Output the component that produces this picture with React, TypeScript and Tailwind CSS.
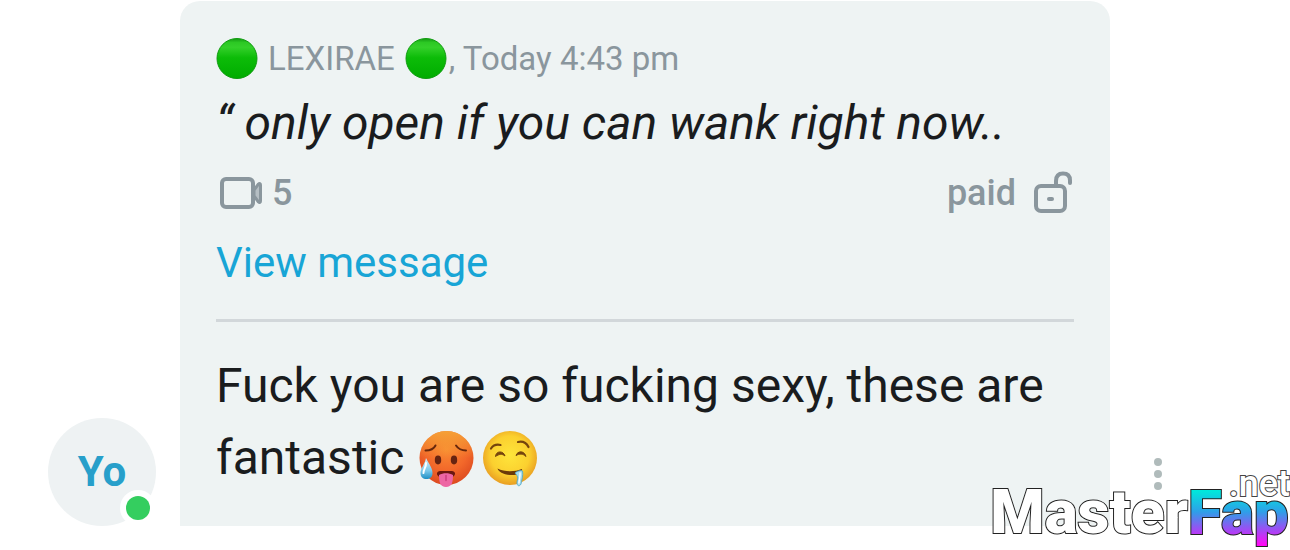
import React from 'react';

const GreenDot = () => (
  <svg viewBox="0 0 42 42" className="w-[42px] h-[42px] shrink-0" role="img" aria-label="green circle">
    <defs>
      <linearGradient id="dot" x1="0" y1="0" x2="0" y2="1">
        <stop offset="0" stopColor="#149a12" />
        <stop offset="0.1" stopColor="#2cc824" />
        <stop offset="0.22" stopColor="#34d02a" />
        <stop offset="0.48" stopColor="#0cbc08" />
        <stop offset="1" stopColor="#00ac00" />
      </linearGradient>
    </defs>
    <circle cx="21" cy="20.5" r="20" fill="url(#dot)" stroke="#109c10" strokeWidth="1" />
  </svg>
);

const VideoIcon = () => (
  <svg viewBox="0 0 48 34" className="w-12 h-[34px]" fill="none" stroke="#8a969d" strokeWidth="4" strokeLinejoin="round">
    <rect x="6" y="3" width="31" height="28" rx="4" />
    <path d="M38 14 L42.5 8 C43.5 7 44.5 7.5 44.5 9 V25 C44.5 26.5 43.5 27 42.5 26 L38 20 Z" fill="#b5bec3" strokeWidth="3" />
  </svg>
);

const UnlockIcon = () => (
  <svg viewBox="0 0 42 44" className="w-[42px] h-11" fill="none" stroke="#8a969d" strokeWidth="4" strokeLinecap="round">
    <rect x="4" y="15" width="29" height="25" rx="5" />
    <path d="M24 14 V10 C24 4.5 27 2.5 31 2.5 C35 2.5 38 4.5 38 9.5 V12" />
    <path d="M17 28 H20" />
  </svg>
);

const HotFace = () => (
  <svg viewBox="0 0 56 58" className="w-14 h-[58px]" role="img" aria-label="hot face">
    <defs>
      <radialGradient id="hot" cx="0.5" cy="0.35" r="0.65">
        <stop offset="0" stopColor="#f98a32" />
        <stop offset="0.6" stopColor="#f2672a" />
        <stop offset="1" stopColor="#dc4a20" />
      </radialGradient>
      <linearGradient id="hotTop" x1="0" y1="0" x2="0" y2="1">
        <stop offset="0" stopColor="#f6a737" stopOpacity="0.9" />
        <stop offset="0.5" stopColor="#f6a737" stopOpacity="0" />
      </linearGradient>
      <linearGradient id="sweat" x1="0" y1="0" x2="0" y2="1">
        <stop offset="0" stopColor="#d9f2fb" />
        <stop offset="0.6" stopColor="#7cc8ea" />
        <stop offset="1" stopColor="#1d8fc4" />
      </linearGradient>
    </defs>
    <circle cx="28.5" cy="28" r="27" fill="url(#hot)" />
    <circle cx="28.5" cy="28" r="27" fill="url(#hotTop)" />
    <path d="M7.5 20.5 C12 20.5 16 18.5 17.5 15.5 M38 15.5 C40 18.5 43.5 20.5 48 20.5" fill="none" stroke="#67280c" strokeWidth="2" strokeLinecap="round" />
    <ellipse cx="20" cy="30" rx="3.2" ry="4.4" fill="#662411" />
    <ellipse cx="36" cy="30" rx="3.2" ry="4.4" fill="#662411" />
    <path d="M19 43 C20 40.5 23 41 28 41 C33 41 36 40.5 37 43 C37.5 46 34 48 28 48 C22 48 18.5 46 19 43 Z" fill="#6b1710" />
    <path d="M21 45 C25 42.5 31 42.5 35 45 C35 52 34 57 28 57 C22 57 21 52 21 45 Z" fill="#ed66a4" />
    <path d="M28 45.5 V50.5" stroke="#c93b7b" strokeWidth="1.4" strokeLinecap="round" />
    <path d="M8 28 C11 34 14.5 38 14.5 43 C14.5 47 12 49 8.5 49 C5 49 2.5 47 2.5 43 C2.5 38 7 34 8 28 Z" fill="url(#sweat)" />
    <path d="M8 33 C8.5 37 5 40 5.5 43" fill="none" stroke="#ffffff" strokeWidth="2" strokeLinecap="round" />
  </svg>
);

const DroolFace = () => (
  <svg viewBox="0 0 56 58" className="w-14 h-[58px]" role="img" aria-label="drooling face">
    <defs>
      <radialGradient id="drool" cx="0.5" cy="0.45" r="0.55">
        <stop offset="0" stopColor="#fee53b" />
        <stop offset="0.65" stopColor="#fbd02f" />
        <stop offset="1" stopColor="#e99e22" />
      </radialGradient>
    </defs>
    <circle cx="28" cy="28" r="27" fill="url(#drool)" />
    <g fill="none" stroke="#75440d" strokeWidth="2.2" strokeLinecap="round">
      <path d="M9 18.5 C11 15.5 14 14 18.5 15" />
      <path d="M36 12 C40.5 11 44.5 13 46.5 17" />
    </g>
    <path d="M13.5 26.5 C14 20.5 21.5 20.5 23 26 C20 23.5 17 24 13.5 26.5 Z" fill="#75440d" stroke="#75440d" strokeWidth="1" />
    <path d="M34 25.5 C35.5 20.5 42.5 20.5 44 26.5 C41 23.5 37.5 23.5 34 25.5 Z" fill="#75440d" stroke="#75440d" strokeWidth="1" />
    <path d="M15.5 38.5 C22 42 33 42 39.5 39 C41.5 39.5 39 45 30 45 C22 45 16.5 42 15.5 38.5 Z" fill="#6b3a0a" />
    <path d="M33 43 C35 41 39 40 40.5 41 C41.5 45 39.5 51 39 54 C37.5 57 34.5 56 35 52 C35.5 49 37 47 33 43 Z" fill="#a8dced" stroke="#4da5c6" strokeWidth="0.8" />
    <path d="M38 43 C38.5 46 37 50 37 53" fill="none" stroke="#ffffff" strokeWidth="1.4" strokeLinecap="round" />
  </svg>
);

const Avatar = () => (
  <div className="relative w-[108px] h-[108px] shrink-0 rounded-full bg-[#eef2f3] flex items-center justify-center">
    <span className="text-[42px] leading-none font-bold text-[#279fca]">Yo</span>
    <span className="absolute right-0 bottom-0 w-9 h-9 rounded-full bg-white flex items-center justify-center">
      <span className="w-6 h-6 rounded-full bg-[#34ce5f]" />
    </span>
  </div>
);

const Watermark = () => (
  <div className="absolute right-0 bottom-0 pointer-events-none font-black leading-none">
    <div className="flex text-[62px] leading-[76px]">
      <span className="text-white [-webkit-text-stroke:2px_#222] [paint-order:stroke_fill]">Master</span>
      <svg viewBox="0 0 102 76" className="w-[102px] h-[76px] overflow-visible">
        <defs>
          <linearGradient id="fap" x1="0" y1="14" x2="0" y2="74" gradientUnits="userSpaceOnUse">
            <stop offset="0.05" stopColor="#00e8dc" />
            <stop offset="0.4" stopColor="#2f9ee8" />
            <stop offset="0.72" stopColor="#a845f5" />
            <stop offset="0.95" stopColor="#ff0af5" />
          </linearGradient>
        </defs>
        <text x="0" y="60" fontSize="62" fill="url(#fap)" stroke="#222" strokeWidth="2" paintOrder="stroke">Fap</text>
      </svg>
    </div>
    <span className="absolute right-0 -top-2 text-[36px] font-medium text-white [-webkit-text-stroke:2px_#444] [paint-order:stroke_fill]">.net</span>
  </div>
);

export default function App() {
  return (
    <div className="relative min-h-[550px] overflow-hidden bg-white font-['Roboto',sans-serif]">
      <div className="flex items-end pt-px pl-12 pr-[84px]">
        <Avatar />
        <article className="ml-6 flex-1 min-w-0 rounded-t-[20px] bg-[#eef3f3] px-9 pt-9 pb-8">
          <header className="flex items-center h-[44px] text-[33px] text-[#8a969d]">
            <GreenDot />
            <span className="mx-2.5">LEXIRAE</span>
            <GreenDot />
            <span className="ml-0.5">, Today 4:43 pm</span>
          </header>
          <p className="text-[48px] leading-[84px] italic text-[#1a1c1e]">“ only open if you can wank right now..</p>
          <div className="flex items-center justify-between h-14 text-[36px] font-medium text-[#8a969d]">
            <span className="flex items-center gap-2">
              <VideoIcon />
              5
            </span>
            <span className="flex items-center gap-4">
              paid
              <UnlockIcon />
            </span>
          </div>
          <a href="#message" className="block text-[42px] leading-[84px] text-[#18a5d6]">View message</a>
          <hr className="mt-[14px] mb-7 border-0 h-[3px] bg-[#d2d7da]" />
          <p className="text-[48px] leading-[72px] text-[#1a1c1e]">
            Fuck you are so fucking sexy, these are fantastic{' '}
            <span className="inline-flex gap-2 ml-0.5 mb-1 align-middle">
              <HotFace />
              <DroolFace />
            </span>
          </p>
        </article>
        <button type="button" aria-label="Message options" className="w-24 shrink-0 pb-9 flex flex-col items-center gap-1">
          <span className="w-2 h-2 rounded-full bg-[#b0bbbb]" />
          <span className="w-2 h-2 rounded-full bg-[#b0bbbb]" />
          <span className="w-2 h-2 rounded-full bg-[#b0bbbb]" />
        </button>
      </div>
      <Watermark />
    </div>
  );
}
